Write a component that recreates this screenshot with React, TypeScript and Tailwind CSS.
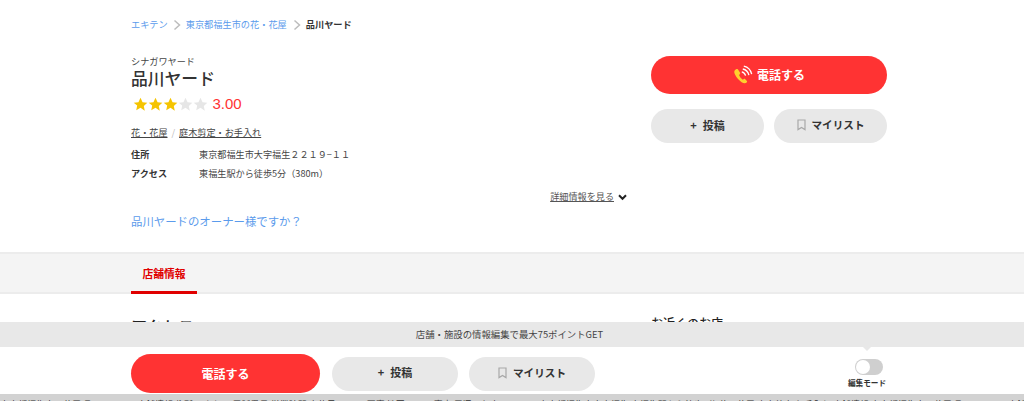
import React from "react";

const jp = "font-['Noto_Sans_CJK_JP','Liberation_Sans',sans-serif]";

function Star({ on }: { on: boolean }) {
  return (
    <svg width="15" height="15" viewBox="0 0 24 24" fill={on ? "#f5c400" : "#e6e6e6"}>
      <path d="M12 1.2l3.3 7 7.6 1-5.6 5.2 1.5 7.6L12 17.2 5.2 21l1.5-7.6L1.1 9.2l7.6-1z" />
    </svg>
  );
}

function Chevron() {
  return (
    <svg width="8" height="12" viewBox="0 0 8 12" fill="none" stroke="#bdbdbd" strokeWidth="1.5">
      <path d="M1.5 1.5L6.5 6l-5 4.5" />
    </svg>
  );
}

function Bookmark() {
  return (
    <svg width="9" height="12" viewBox="0 0 9 12" fill="none" stroke="#a8a8a8" strokeWidth="1.2">
      <path d="M1 1h7v9.6L4.5 8.4 1 10.6z" />
    </svg>
  );
}

function Phone() {
  return (
    <svg width="20" height="20" viewBox="0 0 20 20" fill="none">
      <path d="M3 4.2C.9 5.4.9 7.4 2 9.6c1.4 3 3.900 5.800 6.600 7.600 2 1.300 4 1.500 5.300.1.4-.4.3-.8 0-1.200l-1.900-2c-.4-.4-.8-.4-1.200-.1l-.9.7C8.200 13.600 6.700 11.700 6 9.900l1-.9c.3-.4.3-.8.100-1.200L5 4.400C4.500 3.800 3.700 3.800 3 4.200z" fill="#ffd02e" />
      <path d="M8.800 6.800c1.900.5 3.300 2 3.800 3.900M9.800 4c3.200.7 5.400 3 6.100 6.100M10.800 1.200c4.100.9 7 3.900 7.900 8" stroke="#fff" strokeWidth="1.300" />
    </svg>
  );
}

function GrayButton({ children, className }: { children: React.ReactNode; className: string }) {
  return (
    <div className={`flex items-center justify-center rounded-full bg-[#e8e8e8] pb-[2px] text-[#333] font-bold ${className}`}>
      {children}
    </div>
  );
}

export default function App() {
  return (
    <div className={`relative h-[401px] w-[1024px] overflow-hidden bg-white ${jp}`}>
      <div className="ml-[131px] w-[756px]">
        <nav className="flex h-[50px] items-center text-[9.2px] leading-none pb-px">
          <span className="text-[#5b9bec]">エキテン</span>
          <span className="mx-[5px]"><Chevron /></span>
          <span className="text-[#5b9bec]">東京都福生市の花・花屋</span>
          <span className="ml-[6px] mr-[5px]"><Chevron /></span>
          <span className="font-bold text-[#333]">品川ヤード</span>
        </nav>
        <div className="flex h-[202px] justify-between">
          <div className="w-[496px]">
            <p className="mt-[4px] text-[9.15px] leading-[14px] text-[#444]">シナガワヤード</p>
            <h1 className="mt-[-1px] text-[16.8px] font-medium leading-[22px] text-[#333]">品川ヤード</h1>
            <div className="mt-[6px] flex h-[18px] items-center pl-[1.500px]">
              <Star on /><Star on /><Star on /><Star on={false} /><Star on={false} />
              <span className="ml-[5px] font-['Liberation_Sans',sans-serif] text-[15px] text-[#ff3333]">3.00</span>
            </div>
            <div className="mt-[13px] flex h-[14px] items-center text-[9.15px] leading-none text-[#444]">
              <span className="underline">花・花屋</span>
              <span className="mx-[4px] text-[#bbb]">/</span>
              <span className="underline">庭木剪定・お手入れ</span>
            </div>
            <div className="mt-[5px] flex h-[19px] items-center text-[9.15px] text-[#444]">
              <span className="w-[68px] font-bold text-[#333]">住所</span>
              <span>東京都福生市大字福生２２１９−１１</span>
            </div>
            <div className="flex h-[19px] items-center text-[9.15px] text-[#444]">
              <span className="w-[68px] font-bold text-[#333]">アクセス</span>
              <span>東福生駅から徒歩5分（380m）</span>
            </div>
            <div className="mt-[7px] flex h-[14px] items-center justify-end text-[9.15px] text-[#555]">
              <span className="underline">詳細情報を見る</span>
              <svg className="ml-[4px]" width="9" height="7" viewBox="0 0 9 7" fill="none" stroke="#222" strokeWidth="2">
                <path d="M1 1.300l3.500 3.500 3.500-3.500" />
              </svg>
            </div>
            <p className="mt-[8px] text-[11.4px] leading-[18px] text-[#5b9bec]">品川ヤードのオーナー様ですか？</p>
          </div>
          <div className="flex w-[236px] flex-col gap-[15px] pt-[6px]">
            <div className="flex h-[38px] items-center justify-center gap-[4px] rounded-full bg-[#ff3333] text-[12px] font-bold text-white">
              <Phone />
              <span>電話する</span>
            </div>
            <div className="flex justify-between">
              <GrayButton className="h-[34px] w-[113px] gap-[6px] text-[11px]">
                <span>+</span><span>投稿</span>
              </GrayButton>
              <GrayButton className="h-[34px] w-[113px] gap-[6px] text-[10.6px]">
                <Bookmark /><span>マイリスト</span>
              </GrayButton>
            </div>
          </div>
        </div>
      </div>

      <div className="h-[42px] border-y-2 border-[#ececec] bg-[#f4f4f4]">
        <div className="ml-[131px] w-[756px]">
          <div className="flex h-[40px] w-[66px] items-center justify-center border-b-[3px] border-[#e00000] pt-px text-[10.8px] font-bold text-[#e00000]">
            店舗情報
          </div>
        </div>
      </div>

      <div className="ml-[131px] mt-[20px] flex w-[756px] justify-between text-[#222]">
        <span className="text-[16px] font-medium leading-[24px]">アクセス</span>
        <span className="w-[236px] text-[12px] leading-[18px] font-medium">お近くのお店</span>
      </div>

      <div className="absolute bottom-0 left-0 w-full">
        <div className="flex h-[25px] items-center justify-center bg-[#e8e8e8] text-[9.4px] text-[#444]">
          <span className="ml-[-5px]">店舗・施設の情報編集で最大75ポイントGET</span>
        </div>
        <div className="h-[47px] bg-white">
          <div className="ml-[131px] flex h-full w-[756px] items-start justify-between pt-[7px]">
            <div className="flex items-center">
              <div className="flex h-[39px] w-[189px] items-center justify-center rounded-full bg-[#ff3333] text-[12px] font-bold text-white">
                電話する
              </div>
              <GrayButton className="ml-[12px] h-[34px] w-[126px] gap-[6px] text-[11px]">
                <span>+</span><span>投稿</span>
              </GrayButton>
              <GrayButton className="ml-[11px] h-[34px] w-[126px] gap-[6px] text-[10.6px]">
                <Bookmark /><span>マイリスト</span>
              </GrayButton>
            </div>
            <div className="relative flex w-[40px] flex-col items-center">
              <span className="absolute top-[-7px] h-0 w-0 border-x-[4px] border-t-[4px] border-x-transparent border-t-[#e8e8e8]" />
              <div className="ml-[3px] mt-[5px] flex h-[16px] w-[28px] items-center rounded-full bg-[#cfcfcf] pl-px">
                <span className="h-[14px] w-[14px] rounded-full bg-white" />
              </div>
              <span className="mt-[3px] whitespace-nowrap text-[7.6px] font-bold leading-[10px] text-[#333]">編集モード</span>
            </div>
          </div>
        </div>
        <div className="h-[7px] overflow-hidden bg-[#d2d2d2] pt-[5px] text-[9px] leading-[12px] whitespace-nowrap text-[#333]">
          東京都福生市の花屋 品川ヤードの店舗情報 住所 アクセス 電話番号 営業時間 定休日 口コミ 写真 地図 ルート案内 周辺のお店 エキテン 東京都福生市大字福生 東福生駅から徒歩5分 花・花屋 庭木剪定 お手入れ 店舗情報 東京都福生市の花屋 品川ヤードの店舗情報 住所 アクセス 電話番号 営業時間 定休日
        </div>
      </div>
    </div>
  );
}
